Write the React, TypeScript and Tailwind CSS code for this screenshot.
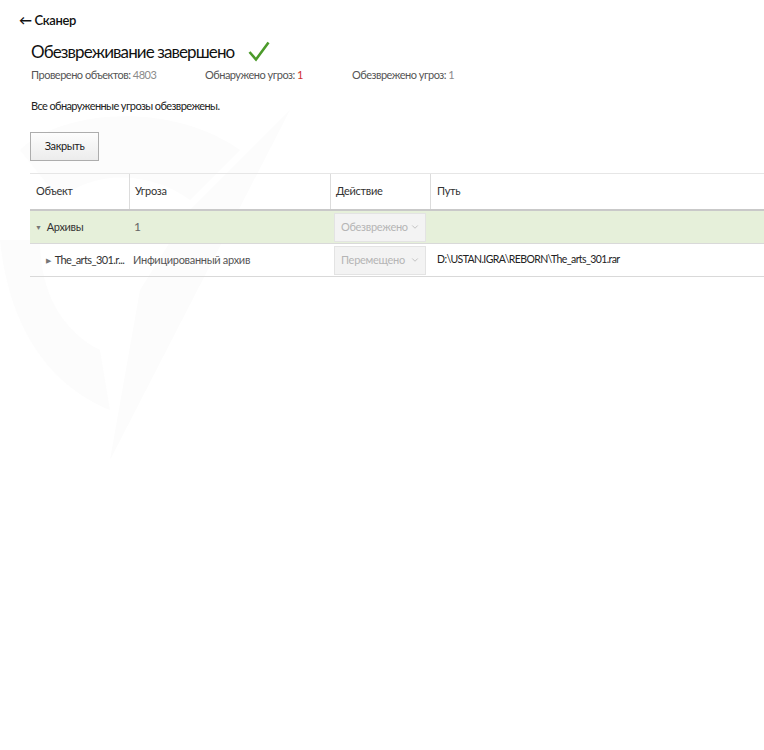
import { ChevronDown } from 'lucide-react';

// Экран результата сканирования
const font = { fontFamily: 'Lato, "Open Sans", "Liberation Sans", sans-serif' };

function ActionSelect({ value }: { value: string }) {
  return (
    <div className="flex h-[29px] w-[92px] items-center justify-between border border-[#e3e3e3] bg-[#f3f3f3] pl-[6px] pr-[5px] text-[11px] tracking-[-0.3px] text-[#b5b5b5]">
      <span>{value}</span>
      <ChevronDown className="h-[10px] w-[10px] text-[#b8b8b8]" strokeWidth={2} />
    </div>
  );
}

function Watermark() {
  return (
    <svg
      className="pointer-events-none absolute left-0 top-[90px]"
      width="300"
      height="380"
      viewBox="0 0 300 380"
      fill="none"
    >
      <path
        d="M20 60 C 60 20, 170 10, 240 60 L 190 110 C 150 80, 90 80, 60 110 Z"
        fill="#fcfcfc"
      />
      <path d="M0 150 C 10 250, 60 300, 110 320 L 100 260 C 60 240, 40 200, 40 150 Z" fill="#fcfcfc" />
      <path d="M190 120 L 290 20 L 110 370 L 140 200 Z" fill="#fcfcfc" />
    </svg>
  );
}

export default function App() {
  return (
    <div className="relative h-[750px] w-[764px] overflow-hidden bg-white text-[#222]" style={font}>
      <Watermark />
      <div className="relative">
        <div className="flex items-center gap-[3px] pl-[19px] pt-[11px] text-[13px] font-semibold tracking-[-0.4px] text-[#111]">
          <span className="font-bold">←</span>
          <span>Сканер</span>
        </div>

        <div className="mt-[8px] flex items-center pl-[31px]">
          <h1 className="text-[17px] font-normal tracking-[-0.9px] text-[#111]">Обезвреживание завершено</h1>
          <svg className="ml-[14px]" width="22" height="21" viewBox="0 0 22 21">
            <path d="M1.5 11 L8 18.5 L20.5 1.5" stroke="#4b9a2a" strokeWidth="2.6" fill="none" />
          </svg>
        </div>

        <div className="mt-[3px] flex pl-[31px] text-[11px] tracking-[-0.5px] text-[#555]">
          <div className="w-[174px]">
            Проверено объектов: <span className="text-[#8a8a8a]">4803</span>
          </div>
          <div className="w-[147px]">
            Обнаружено угроз: <span className="text-[#d0312d]">1</span>
          </div>
          <div>
            Обезврежено угроз: <span className="text-[#8a8a8a]">1</span>
          </div>
        </div>

        <p className="mt-[14px] pl-[31px] text-[11px] tracking-[-0.6px] text-[#222]">
          Все обнаруженные угрозы обезврежены.
        </p>

        <button className="ml-[30px] mt-[18px] h-[29px] w-[69px] border border-[#adadad] bg-gradient-to-b from-[#fdfdfd] to-[#ececec] text-[11px] tracking-[-0.4px] text-[#222]">
          Закрыть
        </button>

        <div className="ml-[30px] mt-[12px] border-t border-[#e6e6e6] text-[11px] tracking-[-0.3px]">
          <div className="grid h-[37px] grid-cols-[99px_201px_100px_1fr] items-center border-b-2 border-[#c9c9c9] text-[#333]">
            <div className="pl-[6px]">Объект</div>
            <div className="flex h-full items-center border-l border-[#dcdcdc] pl-[5px]">Угроза</div>
            <div className="flex h-full items-center border-l border-[#dcdcdc] pl-[5px]">Действие</div>
            <div className="flex h-full items-center border-l border-[#dcdcdc] pl-[6px]">Путь</div>
          </div>

          <div className="grid h-[33px] grid-cols-[99px_201px_100px_1fr] items-center border-b border-[#d9d9d9] bg-[#e6f0da]">
            <div className="flex items-center pl-[5px] text-[#333]">
              <span className="mr-[5px] text-[7px] text-[#777]">▼</span>
              Архивы
            </div>
            <div className="pl-[5px] text-[12px] text-[#666]">1</div>
            <div className="pl-[4px]">
              <ActionSelect value="Обезврежено" />
            </div>
            <div />
          </div>

          <div className="grid h-[33px] grid-cols-[99px_201px_100px_1fr] items-center border-b border-[#d9d9d9]">
            <div className="flex items-center whitespace-nowrap pl-[16px] text-[#333]">
              <span className="mr-[4px] text-[7px] text-[#777]">▶</span>
              <span className="tracking-[-0.6px]">The_arts_301.r...</span>
            </div>
            <div className="pl-[4px] text-[#555]">Инфицированный архив</div>
            <div className="pl-[4px]">
              <ActionSelect value="Перемещено" />
            </div>
            <div className="pl-[7px] text-[10.5px] tracking-[-0.6px] text-[#222]">
              D:\USTAN.IGRA\REBORN\The_arts_301.rar
            </div>
          </div>
        </div>
      </div>
    </div>
  );
}
